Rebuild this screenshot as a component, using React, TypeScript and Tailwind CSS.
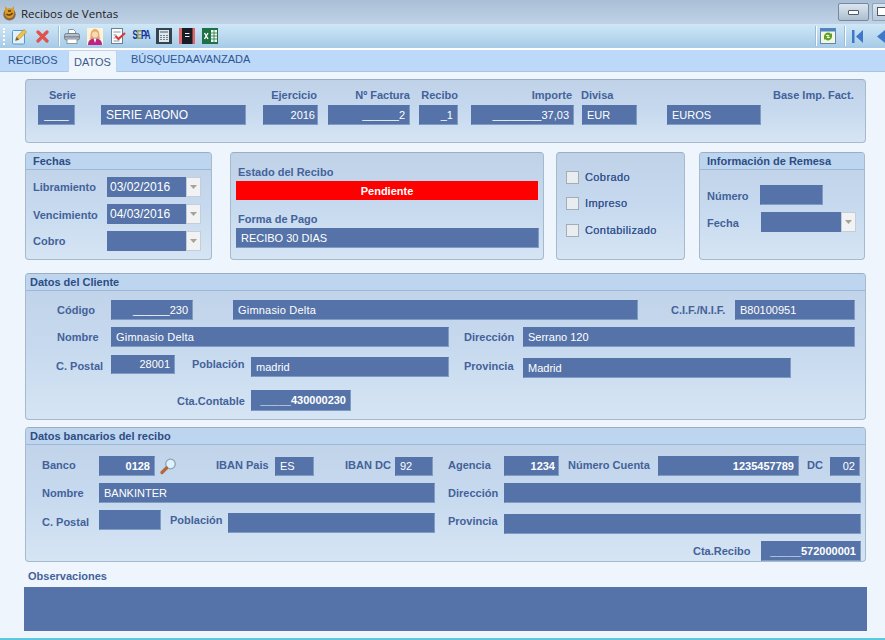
import React from "react";

type P = { className?: string; children?: React.ReactNode };

const L = ({ className = "", children }: P) => (
  <span className={"block shrink-0 whitespace-nowrap text-[11px] font-bold leading-[14px] text-[#43629a] " + className}>{children}</span>
);

const F = ({ className = "", children }: P) => (
  <div className={"flex shrink-0 items-center whitespace-nowrap border border-[#7f9cc4] border-l-[#5573a8] border-t-[#5573a8] bg-[#5573a8] px-[4px] text-[11px] text-white " + className}>{children}</div>
);

const R = ({ className = "", children }: P) => <div className={"flex h-5 items-center " + className}>{children}</div>;

const Arrow = () => (
  <div className="flex h-full w-[15px] shrink-0 items-center justify-center border border-[#c5cdd6] bg-[#f0f2f3]">
    <svg width="7" height="4" viewBox="0 0 7 4"><path d="M0 0h7L3.5 4z" fill="#a8a296" /></svg>
  </div>
);

const Combo = ({ className = "", children }: P) => (
  <div className={"flex h-[20px] shrink-0 " + className}>
    <div className="flex flex-1 items-center bg-[#5573a8] px-[3px] text-[12px] text-white">{children}</div>
    <Arrow />
  </div>
);

const Head = ({ className = "", children }: P) => (
  <div className={"h-[17px] shrink-0 border-b border-[#9db8d6] bg-[#bdd5ee] text-[11px] font-bold leading-[16px] text-[#2d4d85] " + className}>{children}</div>
);

const panel = "rounded-[4px] border border-[#a6b9cd] border-t-[#9aadc2] bg-gradient-to-b from-[#bfd2e8] via-[#c6d9ee] to-[#d6e5f4]";

const Check = ({ className = "", children }: P) => (
  <div className={"flex items-center " + className}>
    <div className="h-[13px] w-[13px] border border-[#a3adb8] bg-[#e9edf0]" />
    <span className="ml-[6px] text-[11px] leading-[14px] tracking-[0.4px] text-[#36568f] [text-shadow:0_0_0.4px_#36568f]">{children}</span>
  </div>
);

const Sep = ({ className = "" }: P) => <div className={"h-[20px] w-[2px] shrink-0 border-r border-white bg-[#9fbcd4] " + className} />;

export default function App() {
  return (
    <div className="flex h-[640px] w-[885px] flex-col overflow-hidden bg-[#eef5fd] font-['Liberation_Sans',Arial,sans-serif]">
      {/* title bar */}
      <div className="flex h-[24px] shrink-0 items-center bg-gradient-to-b from-[#aabfd6] to-[#bfd2e6] pl-[3px] pt-[3px]">
        <svg width="13" height="15" viewBox="0 0 13 15" className="shrink-0">
          <ellipse cx="6.5" cy="8.5" rx="6.2" ry="6" fill="#8a6a48" />
          <path d="M2 0l3 3h3l3-3v7c0 3-2 5-4.500 5S2 10 2 7z" fill="#dd9a1e" />
          <path d="M3.500 8c2 2 4.500 1 6-1M5 5h3" stroke="#5b3a10" strokeWidth="1.500" fill="none" />
        </svg>
        <span className="ml-[5px] font-['Open_Sans',sans-serif] text-[11.5px] text-[#1c1c1c]">Recibos de Ventas</span>
        <div className="mb-[3px] ml-auto flex">
          <div className="flex h-[18px] w-[31px] items-center justify-center rounded-[2px] border border-[#75889c] bg-gradient-to-b from-[#dce6f0] to-[#aebfd0]">
            <div className="h-[5px] w-[11px] rounded-[1px] border border-[#4a5a6a] bg-white" />
          </div>
          <div className="ml-[3px] h-[18px] w-[13px] rounded-l-[2px] border border-r-0 border-[#8fa2b6] bg-gradient-to-b from-[#dce6f0] to-[#b8c9da] pl-[4px] pt-[3px]">
            <div className="h-[9px] w-[9px] border border-[#4a5a6a] bg-white" />
          </div>
        </div>
      </div>
      {/* toolbar */}
      <div className="flex h-[24px] shrink-0 items-center bg-gradient-to-b from-[#cfe7f7] to-[#a6cbe7] pl-[3px]">
        <div className="h-[17px] w-[2px] shrink-0 border-l-2 border-dotted border-white" />
        <svg width="16" height="17" viewBox="0 0 16 17" className="ml-[7px] shrink-0">
          <rect x="0.500" y="2.500" width="12" height="13.500" rx="1" fill="#e2f0fa" stroke="#4f9ad0" />
          <path d="M3.500 12.500l1.200-3.500L12 1.500l2.500 2.500L7 11.500z" fill="#f0c24a" stroke="#b98a2c" strokeWidth="0.700" />
          <path d="M3.500 12.500l1.200-3.500 2.300 2.500z" fill="#6a5a40" />
        </svg>
        <svg width="13" height="13" viewBox="0 0 13 13" className="ml-[8px] shrink-0">
          <path d="M2 2l9 9M11 2l-9 9" stroke="#e2524c" strokeWidth="3.200" strokeLinecap="round" />
        </svg>
        <Sep className="ml-[9px]" />
        <svg width="16" height="15" viewBox="0 0 16 15" className="ml-[4px] shrink-0">
          <path d="M4.500 5V.5h5l2 2V5" fill="#fafcfd" stroke="#8a97a3" />
          <rect x="0.500" y="4.500" width="15" height="6.500" rx="2" fill="#b4bfc9" stroke="#74818d" />
          <rect x="0.800" y="7" width="14.400" height="1.500" fill="#7f8c98" />
          <rect x="3" y="10" width="10" height="4.500" fill="#fff" stroke="#8a97a3" />
        </svg>
        <svg width="16" height="17" viewBox="0 0 16 17" className="ml-[7px] shrink-0">
          <rect width="16" height="17" fill="#fdf3d8" />
          <path d="M3.500 8c0-5 2-7 4.500-7s4.500 2 4.500 7c0 2 1 3 1 3h-11s1-1 1-3z" fill="#e5ad6a" />
          <circle cx="8" cy="6.500" r="3" fill="#f8d8bb" />
          <path d="M1 17c0-5 3-6.500 7-6.500s7 1.500 7 6.500z" fill="#bb2480" />
          <path d="M6.500 10.500h3L8 15z" fill="#fff" />
        </svg>
        <svg width="16" height="16" viewBox="0 0 16 16" className="ml-[7px] shrink-0">
          <rect x="1.500" y="0.500" width="11" height="15" fill="#fafcfe" stroke="#6c7f93" />
          <path d="M3.500 4h7M3.500 7h3M3.500 10h2M3.500 13h6" stroke="#8a98a8" />
          <path d="M5.500 8l3 3L15 5" stroke="#d8383a" strokeWidth="2.200" fill="none" />
        </svg>
        <span className="ml-[7px] flex w-[16px] shrink-0 scale-y-[1.7] justify-center text-[8px] font-bold leading-[14px] tracking-[-1px] text-[#12309a]">S<span className="text-[#9a9a3a]">E</span>PA</span>
        <svg width="16" height="16" viewBox="0 0 16 16" className="ml-[7px] shrink-0">
          <rect width="16" height="16" fill="#33434f" />
          <rect x="3" y="2" width="10" height="12" fill="#dfe6ec" />
          <rect x="4" y="3" width="8" height="2" fill="#8fa0ae" />
          <path d="M4 7h2v1H4zM7 7h2v1H7zM10 7h2v1h-2zM4 9h2v1H4zM7 9h2v1H7zM10 9h2v1h-2zM4 11h2v1H4zM7 11h2v1H7zM10 11h2v1h-2z" fill="#6f8290" />
        </svg>
        <svg width="16" height="16" viewBox="0 0 16 16" className="ml-[7px] shrink-0">
          <rect width="16" height="16" fill="#e0686a" />
          <rect x="3" y="0" width="10.500" height="16" fill="#181c24" />
          <path d="M6 5h4.500v1H6zM6 8h4.500v1H6z" fill="#f2f2f2" />
        </svg>
        <svg width="16" height="16" viewBox="0 0 16 16" className="ml-[7px] shrink-0">
          <rect width="16" height="16" fill="#1e7145" />
          <rect x="9" y="2" width="6" height="12" fill="#f2f7f3" />
          <path d="M9 5h6M9 8h6M9 11h6M12 2v12" stroke="#1e7145" strokeWidth="0.800" />
          <path d="M2.500 5l3.500 6M6 5l-3.500 6" stroke="#fff" strokeWidth="1.400" />
        </svg>
        <div className="ml-auto flex items-center">
          <Sep />
          <svg width="16" height="16" viewBox="0 0 16 16" className="ml-[3px] shrink-0">
            <rect x="0.500" y="0.500" width="15" height="15" fill="#f6f6dc" stroke="#5d86b8" />
            <rect x="1" y="1" width="14" height="2.500" fill="#4d82c4" />
            <path d="M4 8a4 4 0 0 1 7-2l1-1v4H8l1.500-1.500A2.500 2.500 0 0 0 5.500 8zM12 9a4 4 0 0 1-7 2l-1 1V8h4l-1.500 1.500a2.500 2.500 0 0 0 4 -.5z" fill="#58a028" />
          </svg>
          <Sep className="ml-[8px]" />
          <svg width="11" height="13" viewBox="0 0 11 13" className="ml-[6px] shrink-0">
            <rect width="2.500" height="13" fill="#3f78c8" />
            <path d="M11 0v13L4 6.500z" fill="#3f78c8" />
          </svg>
          <svg width="8" height="13" viewBox="0 0 8 13" className="ml-[14px] shrink-0">
            <path d="M8 0v13L0 6.500z" fill="#3f78c8" />
          </svg>
        </div>
      </div>
      <div className="h-[2px] shrink-0 bg-white" />
      {/* tabs */}
      <div className="flex h-[22px] shrink-0 items-end border-b border-[#a9c5e2] bg-[#bcd9f9] text-[11px] text-[#2f5590]">
        <span className="mb-[3px] ml-[8px] w-[48px]">RECIBOS</span>
        <div className="relative top-[1px] ml-[12px] flex h-[22px] w-[49px] items-center justify-center rounded-t-[2px] border border-b-0 border-[#c0d4e8] bg-[#eef5fd] pt-[2px] text-[#3c5a88]">DATOS</div>
        <span className="mb-[4px] ml-[14px]">BÚSQUEDAAVANZADA</span>
      </div>

      {/* panel 1 */}
      <div className={"ml-[25px] mt-[7px] h-[64px] w-[841px] shrink-0 pt-[8px] " + panel}>
        <div className="flex items-start">
          <div className="ml-[12px] flex w-[37px] flex-col">
            <L className="ml-[11px] h-[17px]">Serie</L>
            <F className="h-[20px] justify-center">____</F>
          </div>
          <F className="ml-[26px] mt-[17px] h-[20px] w-[145px] text-[12px]">SERIE ABONO</F>
          <div className="ml-[17px] flex w-[55px] flex-col">
            <L className="mr-[1px] h-[17px] text-right">Ejercicio</L>
            <F className="h-[20px] justify-end !pr-[2px]">2016</F>
          </div>
          <div className="ml-[10px] flex w-[82px] flex-col">
            <L className="h-[17px] text-right">Nº Factura</L>
            <F className="h-[20px] justify-end">______2</F>
          </div>
          <div className="ml-[9px] flex w-[39px] flex-col">
            <L className="h-[17px] text-right">Recibo</L>
            <F className="h-[20px] justify-end">_1</F>
          </div>
          <div className="ml-[13px] flex w-[103px] flex-col">
            <L className="mr-[2px] h-[17px] text-right">Importe</L>
            <F className="h-[20px] justify-end">________37,03</F>
          </div>
          <div className="ml-[8px] flex w-[55px] flex-col">
            <L className="-ml-[1px] h-[17px]">Divisa</L>
            <F className="h-[20px]">EUR</F>
          </div>
          <F className="ml-[30px] mt-[17px] h-[20px] w-[94px]">EUROS</F>
          <L className="ml-[12px]">Base Imp. Fact.</L>
        </div>
      </div>

      {/* row 2 */}
      <div className="ml-[25px] mt-[9px] flex h-[108px] shrink-0">
        <div className={"w-[187px] overflow-hidden " + panel}>
          <Head className="pl-[7px]">Fechas</Head>
          <div className="flex flex-col pl-[7px] pt-[7px]">
            <div className="flex items-center">
              <L className="w-[74px]">Libramiento</L>
              <Combo className="w-[94px]">03/02/2016</Combo>
            </div>
            <div className="mt-[7px] flex items-center">
              <L className="relative top-[1px] w-[74px]">Vencimiento</L>
              <Combo className="w-[94px]">04/03/2016</Combo>
            </div>
            <div className="mt-[7px] flex items-center">
              <L className="w-[74px]">Cobro</L>
              <Combo className="w-[94px]" />
            </div>
          </div>
        </div>
        <div className={"ml-[18px] w-[314px] px-[5px] pt-[12px] " + panel}>
          <L className="ml-[2px]">Estado del Recibo</L>
          <div className="mt-[2px] flex h-[19px] w-[302px] items-center justify-center bg-[#fe0000] pt-[1px] text-[11px] font-bold text-white">Pendiente</div>
          <L className="ml-[2px] mt-[12px]">Forma de Pago</L>
          <F className="mt-[2px] h-[20px] w-[303px]">RECIBO 30 DIAS</F>
        </div>
        <div className={"ml-[12px] w-[129px] pl-[9px] pt-[17px] " + panel}>
          <Check>Cobrado</Check>
          <Check className="mt-[12px]">Impreso</Check>
          <Check className="mt-[13px]">Contabilizado</Check>
        </div>
        <div className={"ml-[14px] w-[166px] overflow-hidden " + panel}>
          <Head className="pl-[7px]">Información de Remesa</Head>
          <div className="flex flex-col pl-[7px] pt-[15px]">
            <div className="flex items-center">
              <L className="relative top-[1px] w-[53px]">Número</L>
              <F className="h-[20px] w-[63px]" />
            </div>
            <div className="mt-[7px] flex items-center">
              <L className="relative top-[1px] w-[54px]">Fecha</L>
              <Combo className="w-[95px]" />
            </div>
          </div>
        </div>
      </div>

      {/* cliente */}
      <div className={"ml-[25px] mt-[13px] h-[147px] w-[841px] shrink-0 overflow-hidden " + panel}>
        <Head className="pl-[4px]">Datos del Cliente</Head>
        <R className="mt-[9px]">
          <L className="ml-[31px] w-[54px]">Código</L>
          <F className="h-[20px] w-[82px] justify-end">______230</F>
          <F className="ml-[40px] h-[20px] w-[405px] tracking-[0.2px]">Gimnasio Delta</F>
          <L className="ml-[33px] w-[64px]">C.I.F./N.I.F.</L>
          <F className="h-[20px] w-[120px]">B80100951</F>
        </R>
        <R className="mt-[7px]">
          <L className="ml-[31px] w-[54px]">Nombre</L>
          <F className="h-[20px] w-[338px] tracking-[0.2px]">Gimnasio Delta</F>
          <L className="ml-[15px] w-[59px]">Dirección</L>
          <F className="h-[20px] w-[332px]">Serrano 120</F>
        </R>
        <div className="mt-[8px] flex h-[23px] items-start">
          <L className="ml-[30px] mt-[4px] w-[55px]">C. Postal</L>
          <F className="h-[19px] w-[64px] justify-end">28001</F>
          <L className="ml-[17px] mt-[2px] w-[59px]">Población</L>
          <F className="mt-[2px] h-[20px] w-[198px]">madrid</F>
          <L className="ml-[15px] mt-[4px] w-[59px]">Provincia</L>
          <F className="mt-[3px] h-[20px] w-[268px]">Madrid</F>
        </div>
        <R className="mt-[12px] h-[21px]">
          <L className="ml-[151px] w-[74px]">Cta.Contable</L>
          <F className="h-[21px] w-[100px] justify-end font-bold">_____430000230</F>
        </R>
      </div>

      {/* bancarios */}
      <div className={"ml-[25px] mt-[7px] h-[135px] w-[841px] shrink-0 overflow-hidden " + panel}>
        <Head className="pl-[4px]">Datos bancarios del recibo</Head>
        <R className="mt-[11px]">
          <L className="mb-[2px] ml-[16px] w-[57px]">Banco</L>
          <F className="h-[20px] w-[56px] justify-end font-bold">0128</F>
          <svg width="17" height="17" viewBox="0 0 17 17" className="ml-[5px] shrink-0">
            <circle cx="10.500" cy="6" r="4.800" fill="#dff1fb" stroke="#88a3b5" strokeWidth="1.300" />
            <path d="M6.500 10L2 14.500" stroke="#b5673a" strokeWidth="3.200" strokeLinecap="round" />
          </svg>
          <L className="mb-[2px] ml-[39px] w-[59px]">IBAN Pais</L>
          <F className="h-[19px] w-[39px]">ES</F>
          <L className="mb-[2px] ml-[31px] w-[50px]">IBAN DC</L>
          <F className="h-[19px] w-[38px]">92</F>
          <L className="mb-[2px] ml-[15px] w-[56px]">Agencia</L>
          <F className="h-[20px] w-[55px] justify-end !pr-[3px] font-bold">1234</F>
          <L className="mb-[2px] ml-[9px] w-[90px]">Número Cuenta</L>
          <F className="h-[20px] w-[141px] justify-end font-bold">1235457789</F>
          <L className="mb-[2px] ml-[8px] w-[23px]">DC</L>
          <F className="h-[19px] w-[30px] justify-end">02</F>
        </R>
        <R className="mt-[7px]">
          <L className="ml-[16px] w-[57px]">Nombre</L>
          <F className="h-[20px] w-[336px]">BANKINTER</F>
          <L className="ml-[13px] w-[56px]">Dirección</L>
          <F className="h-[20px] w-[357px]" />
        </R>
        <div className="mt-[7px] flex h-[24px] items-start">
          <L className="ml-[16px] mt-[5px] w-[57px]">C. Postal</L>
          <F className="h-[20px] w-[62px]" />
          <L className="ml-[9px] mt-[3px] w-[58px]">Población</L>
          <F className="mt-[3px] h-[20px] w-[207px]" />
          <L className="ml-[13px] mt-[4px] w-[56px]">Provincia</L>
          <F className="mt-[4px] h-[20px] w-[357px]" />
        </div>
        <R className="mt-[7px]">
          <L className="ml-[667px] w-[68px]">Cta.Recibo</L>
          <F className="h-[20px] w-[100px] justify-end font-bold">_____572000001</F>
        </R>
      </div>

      {/* observaciones */}
      <L className="ml-[28px] mt-[7px]">Observaciones</L>
      <div className="ml-[24px] mt-[4px] h-[44px] w-[843px] shrink-0 bg-[#5573a8]" />
      <div className="flex-1" />
      <div className="h-[2px] shrink-0 bg-[#5cc8dd]" />
    </div>
  );
}
